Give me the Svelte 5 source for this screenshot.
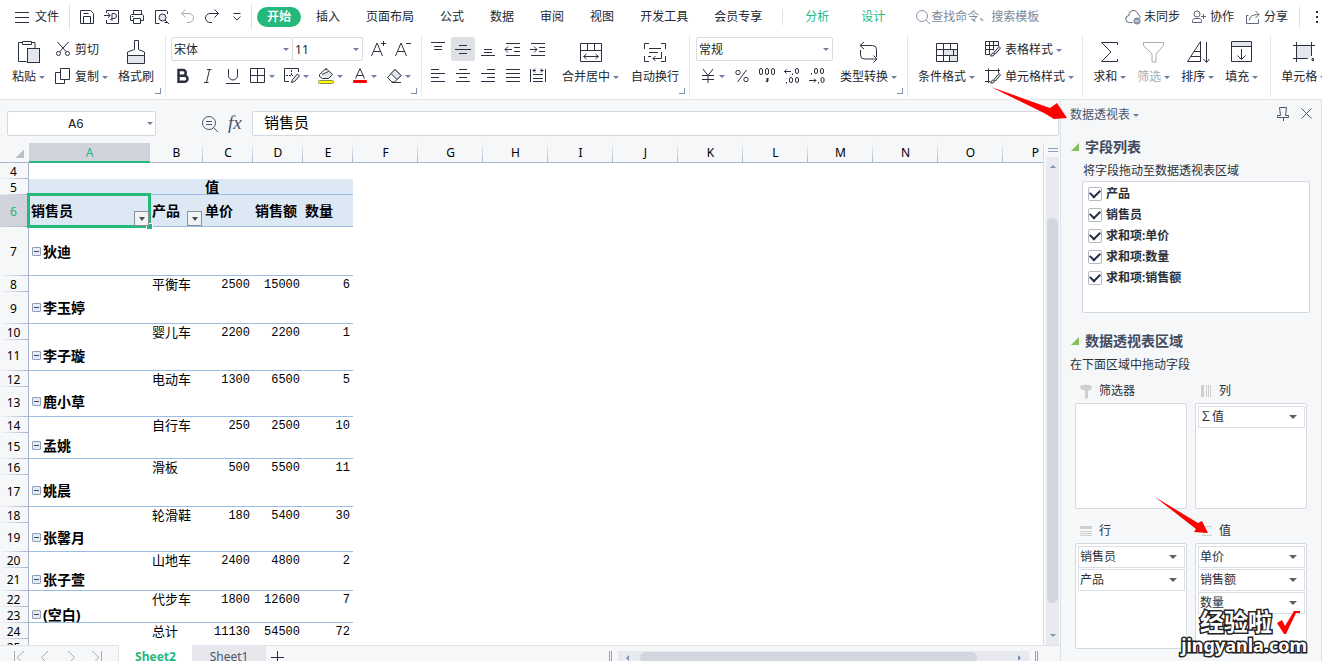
<script>
    let nameBox = 'A6';
    let formula = '销售员';
    let selectedCol = 'A';
    let selectedRow = 6;

    // icon bodies, small ones on a 16 grid, ribbon ones on a 24 grid
    const icons = {
        menu: '<path d="M1 3.5h14M1 8.5h14M1 13.5h14"/>',
        dots: '<path fill="#2b3140" stroke="none" d="M7 2h2v2H7zM7 7h2v2H7zM7 12h2v2H7z"/>',
        save: '<path d="M1.5 1.5h10l3 3v10h-13zM4.5 14.5v-7h7v7M4.5 4.5h5"/>',
        exportPdf: '<path d="M2.5 4V1.5h12v13h-12V11M0 6.5h6M4 4l2 2.5L4 9M8 12V4.5h2a2.500 2.500 0 0 1 0 5c-2 0-3.500 0-3.500 1.500"/>',
        print: '<path d="M4.5 5V1.500h8V5M4 11.500H1.500v-5l1-1h11l1 1v5H12M4.500 9.500h7v5h-7zM3 7.500h1.500"/>',
        preview: '<path d="M5.500 14.500h-4v-13h11l1 1V5M10.500 13.500h3"/><circle cx="8.500" cy="8.500" r="3.500" fill="#e3e6ec"/><path d="M11 11l4 4"/>',
        undo: '<path stroke="#a9adb6" d="M6.500 .500L2.500 4.500l4 4M2.500 4.500H10a4.500 4.500 0 0 1 0 9H8"/>',
        redo: '<path d="M10.500 .500l4 4-4 4M14.500 4.500H6a4.500 4.500 0 0 0 0 9h2"/>',
        more: '<path d="M4.500 4.500h7M4.500 7.500L8 11l3.500-3.500"/>',
        search: '<circle cx="7" cy="7" r="5.500"/><path d="M11 11l4 4"/>',
        cloud: '<path d="M7.500 13.500H4.500a3.500 3.500 0 0 1-.500-7 4.500 4.500 0 0 1 9-1c1.500.500 2.500 2 2 3.500"/><circle cx="12" cy="12" r="3.500" fill="#8491ad" stroke="none"/><path stroke="#fff" d="M10 12h4"/>',
        people: '<circle cx="6" cy="5" r="3"/><path d="M1.500 13.500v-2l1.500-2h6l1.500 2v2zM10 7.500h5M12.500 5v5"/>',
        share: '<path d="M3.500 6.500h-2v8h12v-4M4.500 11.500c0-4 3-6 9-6M10.500 2l3.500 3.500L10.500 9"/>',
        cut: '<path d="M2.500 1L11.500 11M13.500 1L4.500 11"/><circle cx="3.500" cy="12.500" r="2"/><circle cx="12.500" cy="12.500" r="2"/>',
        copy: '<path d="M5.500.500h9v11h-9zM5 4.500H.500v11h9V12"/>',
        growFont: '<path d="M.500 15L6 2l5.500 13M2.500 10.500h7M10 2.500h5M12.500 0v5"/>',
        shrinkFont: '<path d="M.500 15L6 2l5.500 13M2.500 10.500h7M11 2.500h5"/>',
        bold: '<path stroke-width="2.500" d="M3.500 2h5a3 3 0 0 1 0 5.800h-5zM3.500 7.800h6a3 3 0 0 1 0 6h-6z"/>',
        italic: '<path d="M7 1.500h4.500M4 14.500h4.500M9.500 1.500l-3 13"/>',
        underline: '<path d="M3.500 1v6.500a4.500 4.500 0 0 0 9 0V1M1 15.500h14"/>',
        borders: '<path d="M.500.500h14v14h-14zM7.500.500v14M.500 7.500h14"/>',
        drawBorder: '<path d="M3 .500H.500v13H5M3 .500h11.500V4"/><path stroke-dasharray="2 1" d="M2 7.500h7M7.500 2v6"/><path d="M7.500 14.500l1-3L13.500 6l2 2-5 5.500z" fill="#e3e6ec"/>',
        fill: '<path fill="#e3e6ec" stroke="none" d="M4 7l8-3 3 3-4 4H6z"/><path d="M1.500 6.500l6.500-6 6.500 6-4 4h-6l-3-2zM4 6.500l6.500-3M8 .500v2"/><rect x=".500" y="12.500" width="15" height="3" rx="1" fill="#ffff00" stroke="#8a8a55"/>',
        fontColor: '<path d="M3.500 10.500L8 .500l4.500 10M5 7.500h6"/><rect x="1" y="12" width="14" height="3" rx="1" fill="#ff0000" stroke="none"/>',
        eraser: '<path d="M9 1.500l6 6-6.500 6.500H6L1.500 9.500z"/><path d="M9 1.500l6 6-4 4-6-6z" fill="#e3e6ec"/><path d="M6 14.500h9"/>',
        alignTop: '<path d="M1 1.500h14M4 5.500h8M4 8.500h8"/>',
        alignMid: '<path d="M4 4.500h8M0 8.500h16M4 12.500h8"/>',
        alignBottom: '<path d="M4 8.500h8M4 11.500h8M1 14.500h14"/>',
        outdent: '<path d="M1 2.500h14M9 6.500h6M9 10.500h6M1 14.500h14M0 8.500h7M3 5.500l-3 3 3 3"/>',
        indent: '<path d="M1 2.500h14M9 6.500h6M9 10.500h6M1 14.500h14M0 8.500h7M4 5.500l3 3-3 3"/>',
        alignLeft: '<path d="M1 1.500h8M1 5.500h14M1 9.500h8M1 13.500h14"/>',
        alignCenter: '<path d="M4 1.500h8M1 5.500h14M4 9.500h8M1 13.500h14"/>',
        alignRight: '<path d="M7 1.500h8M1 5.500h14M7 9.500h8M1 13.500h14"/>',
        justify: '<path d="M1 1.500h14M1 5.500h14M1 9.500h14M1 13.500h14"/>',
        distribute: '<path d="M.500 1v13M15.500 1v13M3 2.500h3M10 2.500h3M5 .500l-2 2 2 2M11 .500l2 2-2 2M3 6.500h10M3 10.500h10M3 13.500h10"/>',
        yen: '<path d="M3 1l5 6.500L13 1M8 7.500V15M2 7.500h12M2 11.500h12"/>',
        percent: '<circle cx="4" cy="4.500" r="2.200"/><circle cx="12" cy="11.500" r="2.200"/><path d="M12.500 2l-9 12"/>',
        thousands: '<rect x=".500" y=".500" width="3" height="6" rx="1.500"/><rect x="6.500" y=".500" width="3" height="6" rx="1.500"/><rect x="12.500" y=".500" width="3" height="6" rx="1.500"/><path stroke-width="2" d="M8.500 10v2.500l-1 1.500"/>',
        addDecimal: '<path d="M0 3.500h7M2.500 1.500l-2 2 2 2M8.500 5.500v1.500M2.500 14v1.500"/><rect x="11.500" y=".500" width="3" height="5" rx="1.500"/><rect x="5.500" y="9.500" width="3" height="5" rx="1.500"/><rect x="11.500" y="9.500" width="3" height="5" rx="1.500"/>',
        cutDecimal: '<path d="M0 12.500h7M5 10.500l2 2-2 2M2.500 5v1.500M9.500 14v1.500"/><rect x="5.500" y=".500" width="3" height="5" rx="1.500"/><rect x="11.500" y=".500" width="3" height="5" rx="1.500"/><rect x="12" y="9.500" width="3" height="5" rx="1.500"/>',
        tableStyle: '<path d="M5 13.500H.500v-13h13V5M.500 4.500h13M.500 8.500H9M4.500.500v13M8.500.500v9"/><path d="M5.500 15c1-1 .500-3 3-3l1 1c0 2-2 2-4 2zM9 11.500l5-6 1.500 1.500-5 6z" fill="#e3e6ec"/>',
        cellStyle: '<path d="M0 2.500h15M3.500.500V15M13.500.500V5M0 13.500h5"/><path d="M5.500 15c1-1 .500-3 3-3l1 1c0 2-2 2-4 2zM9 11.500l5-6 1.500 1.500-5 6z" fill="#e3e6ec"/>',
        paste: '<path d="M9.500 21.500h-8v-19h4M14 2.500h4V8M5.500 1.500h9v3h-9z"/><rect x="10.500" y="8.500" width="12" height="14" fill="#e3e6ec"/>',
        brush: '<path d="M3.500 16v-4l7-2.500v-9h4v9l6 2.500v4"/><path d="M3.500 15.500h17v8h-17z" fill="#e3e6ec"/>',
        merge: '<path d="M1.500 3.500h21v18h-21zM1.500 10.500h21M8.500 3.500v7M15.500 3.500v7M5 16.500h14M7.500 14l-3 2.500 3 2.500M16.500 14l3 2.500-3 2.500"/>',
        wrap: '<path d="M6 3.500H1.500V9M18 3.500h4.500V9M6 21.500H1.500V16M18 21.500h4.500V16M6 8.500h12M6 12.500h9M18.500 12v6.500H10M12.500 16l-2.500 2.500 2.500 2.500M5 16.500h3"/>',
        convert: '<path d="M3 5.500h12.500a4 4 0 0 1 4 4V17M7 2L3 5.500 7 9M3.500 10v5a4 4 0 0 0 4 4H20M16.500 15.500L20 19l-3.500 3.500"/>',
        conditional: '<path fill="#e3e6ec" stroke="none" d="M8 9h14v6H8zM14 15h8v6h-8z"/><path d="M1.500 3.500h21v18h-21zM1.500 9.500h21M1.500 15.500h21M8.500 3.500v6M15.500 3.500v6M8.500 9.500v12M14.500 15.500v6M18.500 9.500v6"/>',
        sum: '<path d="M19.500 5V2.500H3.500L13 12 3.500 21.500h16V19"/>',
        filter: '<path stroke="#a9adb6" d="M1.500 2.500h20v3l-7.500 8.500v8h-4v-8L1.500 5.500z"/>',
        sort: '<path d="M1.500 21.500h13v-20zM5 16.500h9M8 11.500h6M20.500 2v20M17.500 19l3 3.500 3-3.500"/>',
        fillDown: '<path fill="#e3e6ec" stroke="none" d="M2 2h20v4H2z"/><path d="M1.500 1.500h20v20h-20zM1.500 6.500h20M11.500 9v10M7.500 15.500l4 4 4-4"/>',
        cells: '<path fill="#e3e6ec" stroke="none" d="M5 6h14v12H5z"/><path d="M1 5.500h22M4.500 2v20M19.500 2v14M1 18.500h15M20 18.500h1.500v2H20z"/>',
        zoomOut: '<circle cx="8" cy="8" r="6.500"/><path d="M5 6.500h6M5 9.500h6M12.500 12.500l4.500 4.500"/>',
        pin: '<path d="M4.500 1.500h7l-1 8h3v2h-11v-2h3zM8.500 11.500V15"/>',
        close: '<path d="M2.500 2.500l10 10M12.500 2.500l-10 10"/>',
        first: '<path d="M3.500 2v13M13 2L6 8.500 13 15"/>',
        prev: '<path d="M11 2L4.500 8.500 11 15"/>',
        next: '<path d="M5 2l6.500 6.500L5 15"/>',
        last: '<path d="M3 2l7 6.500L3 15M12.500 2v13"/>',
        plus: '<path d="M7.500 2v13M1 8.500h13"/>',
        areaFilter: '<path fill="#cfcfcf" stroke="none" d="M2 4c0-3 12-3 12 0 0 2-2 3-4 4v7.500H7V8C5 7 2 6 2 4z"/>',
        areaColumn: '<path fill="#cfcfcf" stroke="none" d="M3 2h3v12H3zM8 2h1v12H8zM10 2h1v12h-1zM12 2h1v12h-1z"/>',
        areaRow: '<path fill="#cfcfcf" stroke="none" d="M2 3h12v3H2zM2 8h12v1H2zM2 10h12v1H2zM2 12h12v1H2z"/>',
        areaValue: '<path stroke="#cfcfcf" d="M13 5V3.500H4L9 8l-5 4.500h9V11"/>'
    };

    const quick = ['save', 'exportPdf', 'print', 'preview', 'undo', 'redo', 'more'];
    const tabs = ['插入', '页面布局', '公式', '数据', '审阅', '视图', '开发工具', '会员专享'];
    const vertical = ['alignTop', 'alignMid', 'alignBottom', 'outdent', 'indent'];
    const horizontal = ['alignLeft', 'alignCenter', 'alignRight', 'justify', 'distribute'];
    const fontTools = ['borders', 'drawBorder', 'fill', 'fontColor', 'eraser'];

    const columns = [
        {name: 'A', width: 121}, {name: 'B', width: 53}, {name: 'C', width: 50},
        {name: 'D', width: 50}, {name: 'E', width: 50},
        ...'FGHIJKLMNOP'.split('').map((name) => ({name, width: 65}))
    ];

    const rows = [
        {n: 4, height: 16, cells: []},
        {n: 5, height: 16, kind: 'head', line: true, cells: ['', '', '值']},
        {n: 6, height: 32, kind: 'head', line: true, cells: ['销售员', '产品', '单价', '销售额', '数量']},
        {n: 7, height: 49, line: true, group: '狄迪', cells: []},
        {n: 8, height: 16, cells: ['', '平衡车', 2500, 15000, 6]},
        {n: 9, height: 32, line: true, group: '李玉婷', cells: []},
        {n: 10, height: 16, cells: ['', '婴儿车', 2200, 2200, 1]},
        {n: 11, height: 31, line: true, group: '李子璇', cells: []},
        {n: 12, height: 16, cells: ['', '电动车', 1300, 6500, 5]},
        {n: 13, height: 30, line: true, group: '鹿小草', cells: []},
        {n: 14, height: 16, cells: ['', '自行车', 250, 2500, 10]},
        {n: 15, height: 26, line: true, group: '孟姚', cells: []},
        {n: 16, height: 16, cells: ['', '滑板', 500, 5500, 11]},
        {n: 17, height: 32, line: true, group: '姚晨', cells: []},
        {n: 18, height: 16, cells: ['', '轮滑鞋', 180, 5400, 30]},
        {n: 19, height: 29, line: true, group: '张馨月', cells: []},
        {n: 20, height: 16, cells: ['', '山地车', 2400, 4800, 2]},
        {n: 21, height: 23, line: true, group: '张子萱', cells: []},
        {n: 22, height: 16, cells: ['', '代步车', 1800, 12600, 7]},
        {n: 23, height: 16, line: true, group: '(空白)', cells: []},
        {n: 24, height: 16, cells: ['', '总计', 11130, 54500, 72]},
        {n: 25, height: 16, cells: []}
    ];

    let fields = [
        {name: '产品', checked: true},
        {name: '销售员', checked: true},
        {name: '求和项:单价', checked: true},
        {name: '求和项:数量', checked: true},
        {name: '求和项:销售额', checked: true}
    ];

    const areas = [
        {name: '筛选器', icon: 'areaFilter', items: []},
        {name: '列', icon: 'areaColumn', items: ['∑值']},
        {name: '行', icon: 'areaRow', items: ['销售员', '产品']},
        {name: '值', icon: 'areaValue', items: ['单价', '销售额', '数量']}
    ];
</script>

{#snippet icon(name, size = 16)}
    <svg class="icon" width={size} height={size} viewBox="0 0 {size} {size}" aria-hidden="true">{@html icons[name]}</svg>
{/snippet}

{#snippet big(name, label, caret = true)}
    <button class="Big">
        {@render icon(name, 24)}
        <span class="Label">{label}{#if caret}<i class="caret"></i>{/if}</span>
    </button>
{/snippet}

{#snippet small(name, label, caret = false)}
    <button class="Small">
        {@render icon(name)}
        <span class="Label">{label}{#if caret}<i class="caret"></i>{/if}</span>
    </button>
{/snippet}

<div class="App">
    <nav class="Menu">
        <button class="File">{@render icon('menu')}文件</button>
        <div class="Quick">
            {#each quick as name}
                <button aria-label={name}>{@render icon(name)}</button>
            {/each}
        </div>
        <button class="Tab Tab--active">开始</button>
        <div class="Tabs">
            {#each tabs as tab}
                <button class="Tab">{tab}</button>
            {/each}
        </div>
        <div class="Context">
            <button class="Tab">分析</button>
            <button class="Tab">设计</button>
        </div>
        <label class="Search">
            {@render icon('search')}
            <input type="text" placeholder="查找命令、搜索模板">
        </label>
        <div class="Account">
            <button>{@render icon('cloud')}未同步</button>
            <button>{@render icon('people')}协作</button>
            <button>{@render icon('share')}分享</button>
            <button class="Dots" aria-label="更多">{@render icon('dots')}</button>
        </div>
    </nav>

    <div class="Ribbon">
        <div class="Group Group--corner">
            {@render big('paste', '粘贴')}
            <div class="Stack">
                {@render small('cut', '剪切')}
                {@render small('copy', '复制', true)}
            </div>
            {@render big('brush', '格式刷', false)}
        </div>
        <div class="Group Group--font Group--corner">
            <div class="Stack">
                <div class="Row Row--fields">
                    <div class="Pick Pick--family">
                        <select aria-label="字体"><option>宋体</option></select><i class="caret"></i>
                    </div>
                    <div class="Pick Pick--size">
                        <select aria-label="字号"><option>11</option></select><i class="caret"></i>
                    </div>
                    <button aria-label="增大字号">{@render icon('growFont')}</button>
                    <button aria-label="减小字号">{@render icon('shrinkFont')}</button>
                </div>
                <div class="Row Row--tools">
                    {#each ['bold', 'italic', 'underline'] as name}
                        <button aria-label={name}>{@render icon(name)}</button>
                    {/each}
                    {#each fontTools as name}
                        <button aria-label={name}>{@render icon(name)}<i class="caret"></i></button>
                    {/each}
                </div>
            </div>
        </div>
        <div class="Group Group--align Group--corner">
            <div class="Stack">
                <div class="Row">
                    {#each vertical as name}
                        <button class="Align" class:Align--on={name == 'alignMid'} aria-label={name}>{@render icon(name)}</button>
                    {/each}
                </div>
                <div class="Row">
                    {#each horizontal as name}
                        <button class="Align" aria-label={name}>{@render icon(name)}</button>
                    {/each}
                </div>
            </div>
            {@render big('merge', '合并居中')}
            {@render big('wrap', '自动换行', false)}
        </div>
        <div class="Group Group--number Group--corner">
            <div class="Stack">
                <div class="Pick Pick--format">
                    <select aria-label="数字格式"><option>常规</option></select><i class="caret"></i>
                </div>
                <div class="Row Row--tools">
                    <button aria-label="货币">{@render icon('yen')}<i class="caret"></i></button>
                    {#each ['percent', 'thousands', 'addDecimal', 'cutDecimal'] as name}
                        <button aria-label={name}>{@render icon(name)}</button>
                    {/each}
                </div>
            </div>
            {@render big('convert', '类型转换')}
        </div>
        <div class="Group">
            {@render big('conditional', '条件格式')}
            <div class="Stack">
                {@render small('tableStyle', '表格样式', true)}
                {@render small('cellStyle', '单元格样式', true)}
            </div>
        </div>
        <div class="Group Group--edit">
            {@render big('sum', '求和')}
            <div class="Muted">{@render big('filter', '筛选')}</div>
            {@render big('sort', '排序')}
            {@render big('fillDown', '填充')}
        </div>
        <div class="Group">
            {@render big('cells', '单元格')}
        </div>
    </div>

    <div class="Main">
        <section class="Sheet">
            <div class="Formula">
                <div class="NameBox">
                    <input type="text" aria-label="名称框" bind:value={nameBox}><i class="caret"></i>
                </div>
                <button class="ZoomOut" aria-label="缩小">{@render icon('zoomOut', 18)}</button>
                <button class="Fx">fx</button>
                <input class="Formula__Text" type="text" aria-label="编辑栏" bind:value={formula}>
            </div>
            <div class="Body">
                <div class="Grid">
                    <table>
                        <colgroup>
                            <col style="width: 29px">
                            {#each columns as col}
                                <col style="width: {col.width}px">
                            {/each}
                        </colgroup>
                        <thead>
                            <tr>
                                <th class="All" aria-label="全选"></th>
                                {#each columns as col}
                                    <th class="Col" class:Col--on={col.name == selectedCol}>{col.name}</th>
                                {/each}
                            </tr>
                        </thead>
                        <tbody>
                            {#each rows as row}
                                <tr class:Head={row.kind == 'head'} class:Line={row.line} style="height: {row.height}px">
                                    <th class="Num" class:Num--on={row.n == selectedRow}>{row.n}</th>
                                    {#each columns as col, i}
                                        <td class:Number={typeof row.cells[i] == 'number'} class:Data={i < 5}>
                                            {#if i == 0 && row.group}
                                                <span class="Person"><button class="Toggle" aria-label="折叠"></button>{row.group}</span>
                                            {:else}
                                                {row.cells[i] ?? ''}
                                            {/if}
                                            {#if row.n == 6 && i == 0}
                                                <span class="Selection"></span>
                                            {/if}
                                            {#if row.n == 6 && i < 2}
                                                <button class="Filter" aria-label="筛选"></button>
                                            {/if}
                                        </td>
                                    {/each}
                                </tr>
                            {/each}
                        </tbody>
                    </table>
                </div>
                <div class="Gutter">
                    <span class="Split"></span>
                    <div class="Track">
                        <i class="arrow arrow--up"></i>
                        <div class="Thumb"></div>
                        <i class="arrow arrow--down"></i>
                    </div>
                </div>
            </div>
            <div class="Bottom">
                <div class="Nav">
                    {#each ['first', 'prev', 'next', 'last'] as name}
                        <button aria-label={name}>{@render icon(name)}</button>
                    {/each}
                </div>
                <button class="Page Page--on">Sheet2</button>
                <button class="Page">Sheet1</button>
                <button class="Add" aria-label="新建工作表">{@render icon('plus')}</button>
                <div class="HScroll">
                    <span class="Grip"></span>
                    <div class="HTrack">
                        <i class="arrow arrow--left"></i>
                        <div class="HThumb"></div>
                        <i class="arrow arrow--right"></i>
                    </div>
                    <span class="Grip"></span>
                </div>
            </div>
        </section>

        <aside class="Panel">
            <header class="Panel__Header">
                <button class="Label">数据透视表<i class="caret"></i></button>
                <button class="Pin" aria-label="固定">{@render icon('pin')}</button>
                <button aria-label="关闭">{@render icon('close')}</button>
            </header>
            <h2>字段列表</h2>
            <p class="Hint Hint--fields">将字段拖动至数据透视表区域</p>
            <div class="Fields">
                {#each fields as field}
                    <label><input type="checkbox" bind:checked={field.checked}>{field.name}</label>
                {/each}
            </div>
            <h2>数据透视表区域</h2>
            <p class="Hint">在下面区域中拖动字段</p>
            <div class="Areas">
                {#each areas as area}
                    <div class="Area">
                        <h3>{@render icon(area.icon)}{area.name}</h3>
                        <div class="Area__Box">
                            {#each area.items as item}
                                <button class="Item">{item}<i></i></button>
                            {/each}
                        </div>
                    </div>
                {/each}
            </div>
            <svg class="Arrow Arrow--title" width="80" height="36" viewBox="0 0 80 36" aria-hidden="true">
                <path d="M1 1L60 22L67 17L77 32L64 33L54 27Z"/>
            </svg>
            <svg class="Arrow Arrow--value" width="56" height="40" viewBox="0 0 56 40" aria-hidden="true">
                <path d="M1 1L44 27L48 25L54 37L40 36L42 33Z"/>
            </svg>
            <div class="Mark">
                <div class="Mark__Name">
                    经验啦
                    <svg width="24" height="24" viewBox="0 0 24 24" aria-hidden="true">
                        <path d="M0 12l5-3 3 6L17 0h6v2h-4L9 23H7z"/>
                    </svg>
                </div>
                <div class="Mark__Site">jingyanla.com</div>
            </div>
        </aside>
    </div>
</div>

<style>
    :global(body) {
        overflow: hidden;
    }

    .App {
        display: flex;
        flex-direction: column;
        height: 100vh;
        overflow: hidden;
        background: #ffffff;
        color: #23272f;
        font-family: "Noto Sans", "Noto Sans CJK SC", sans-serif;
        font-size: 12px;
        line-height: 16px;
    }

    .App * {
        box-sizing: border-box;
    }

    button, input, select {
        margin: 0;
        padding: 0;
        border: none;
        outline: none;
        background: none;
        color: inherit;
        font: inherit;
    }

    button {
        display: flex;
        align-items: center;
        white-space: nowrap;
        flex: none;
    }

    .icon {
        display: block;
        flex: none;
        overflow: visible;
        fill: none;
        stroke: #2b3140;
        stroke-width: 1;
    }

    .caret {
        flex: none;
        margin-left: 3px;
        border: 3px solid transparent;
        border-top-color: #6f7f9f;
        border-bottom: none;
    }

    .Menu {
        display: flex;
        align-items: center;
        flex: none;
        height: 33px;
        padding-left: 14px;
    }

    .File {
        gap: 5px;
        height: 24px;
        padding-right: 10px;
        border-right: 1px solid #dcdfe3;
    }

    .Quick {
        display: flex;
        gap: 9px;
        height: 24px;
        padding: 0 6px 0 9px;
        border-right: 1px solid #dcdfe3;
    }

    .Tabs {
        display: flex;
    }

    .Tab {
        padding: 0 13px;
    }

    .Tab--active {
        height: 20px;
        margin: 0 2px 0 5px;
        padding: 0 10px;
        border-radius: 10px;
        background: #22b97b;
        color: #ffffff;
        font-weight: bold;
    }

    .Context {
        display: flex;
        gap: 6px;
        margin-left: 7px;
        padding-left: 9px;
        border-left: 1px solid #dcdfe3;
        color: #22b97b;
    }

    .Search {
        display: flex;
        align-items: center;
        flex: 1;
        min-width: 60px;
        margin-left: 17px;
        color: #7e8798;
    }

    .Search .icon {
        stroke: #8a93a6;
    }

    .Search input {
        flex: 1;
        min-width: 0;
    }

    .Search input::placeholder {
        color: #7e8798;
        opacity: 1;
    }

    .Account {
        display: flex;
        align-items: center;
        gap: 11px;
        margin-left: auto;
    }

    .Account button {
        gap: 3px;
    }

    .Account .icon {
        stroke: #5d6778;
    }

    .Account .Dots {
        width: 23px;
        height: 20px;
        padding-left: 9px;
        border-left: 1px solid #dcdfe3;
    }

    .Ribbon {
        display: flex;
        flex: none;
        height: 67px;
        overflow: hidden;
        border-bottom: 1px solid #e1e3e6;
    }

    .Group {
        position: relative;
        display: flex;
        flex: none;
        gap: 10px;
        padding: 4px 9px 0 10px;
    }

    .Group:first-child {
        padding-left: 12px;
    }

    .Group::before {
        content: "";
        position: absolute;
        right: 0;
        top: 2px;
        bottom: 2px;
        border-right: 1px solid #e6e8eb;
    }

    .Group--corner::after {
        content: "";
        position: absolute;
        right: 5px;
        bottom: 5px;
        width: 5px;
        height: 5px;
        border: solid #8491ad;
        border-width: 0 1px 1px 0;
    }

    .Group--corner {
        padding-right: 12px;
    }

    .Group--font {
        padding-left: 5px;
        padding-right: 11px;
    }

    .Group--align {
        gap: 12px;
        padding-left: 4px;
        padding-right: 11px;
    }

    .Group--number {
        gap: 7px;
        padding-left: 6px;
        padding-right: 11px;
    }

    .Group--edit {
        gap: 11px;
        padding-right: 13px;
    }

    .Stack {
        display: flex;
        flex-direction: column;
        gap: 3px;
    }

    .Row {
        display: flex;
        gap: 1px;
        height: 24px;
    }

    .Row--tools {
        gap: 9px;
        padding-left: 4px;
    }

    .Row--fields {
        gap: 0;
    }

    .Row--fields button {
        margin-left: 8px;
    }

    .Big {
        flex-direction: column;
        padding-top: 3px;
    }

    .Label {
        display: flex;
        align-items: center;
        height: 24px;
        padding-top: 2px;
    }

    .Small {
        gap: 4px;
        height: 24px;
    }

    .Muted {
        color: #a9adb6;
    }

    .Align {
        justify-content: center;
        width: 24px;
        height: 24px;
        border-radius: 2px;
    }

    .Align--on {
        background: #dde1e6;
    }

    .Pick {
        display: flex;
        align-items: center;
        height: 24px;
        padding-right: 3px;
        border: 1px solid #d9dce1;
        border-radius: 2px;
    }

    .Pick select {
        flex: 1;
        min-width: 0;
        padding: 1px 0 0 2px;
        appearance: none;
    }

    .Pick--family {
        width: 122px;
    }

    .Pick--size {
        width: 71px;
        margin-left: -1px;
    }

    .Pick--format {
        width: 137px;
    }

    .Main {
        display: flex;
        flex: 1;
        min-height: 0;
        background: #f5f7f9;
    }

    .Sheet {
        display: flex;
        flex-direction: column;
        flex: 1;
        min-width: 0;
    }

    .Formula {
        display: flex;
        align-items: center;
        flex: none;
        padding: 11px 1px 7px 7px;
    }

    .NameBox {
        display: flex;
        align-items: center;
        width: 149px;
        height: 25px;
        padding-right: 2px;
        border: 1px solid #d5d9df;
        border-radius: 2px;
        background: #ffffff;
    }

    .NameBox input {
        flex: 1;
        min-width: 0;
        padding-top: 2px;
        font-family: "Liberation Mono", monospace;
        font-size: 13px;
        text-align: center;
    }

    .ZoomOut {
        margin-left: 45px;
    }

    .ZoomOut .icon, .Panel__Header .icon {
        stroke: #4b566c;
    }

    .Fx {
        width: 33px;
        padding: 0 0 2px 9px;
        color: #4b566c;
        font-family: "Liberation Serif", serif;
        font-size: 19px;
        font-style: italic;
    }

    .Formula__Text {
        flex: 1;
        min-width: 0;
        height: 25px;
        padding: 0 11px 5px;
        border: 1px solid #d5d9df;
        border-radius: 2px;
        background: #ffffff;
        color: #000000;
        font-size: 15px;
    }

    .Body {
        display: flex;
        flex: 1;
        min-height: 0;
    }

    .Grid {
        flex: 1;
        min-width: 0;
        overflow: hidden;
        border-right: 1px solid #d9dde4;
        background: #ffffff;
    }

    table {
        width: 1px;
        table-layout: fixed;
        border-collapse: separate;
        border-spacing: 0;
        color: #000000;
        font-size: 13px;
        line-height: 15px;
    }

    th, td {
        padding: 0;
        font-weight: normal;
        white-space: nowrap;
    }

    thead th {
        height: 20px;
        border-bottom: 1px solid #aab4cc;
        background: linear-gradient(to bottom, transparent, #aab4cc) right / 1px 100% no-repeat #f5f7f9;
    }

    .Col {
        font-size: 12px;
    }

    .Col--on {
        border-bottom: 2px solid #22b97b;
        background: #d0d3db;
        color: #22b97b;
    }

    .All {
        background: linear-gradient(135deg, transparent 50%, #b9bdc5 50%) 15px 6px / 9px 9px no-repeat #f5f7f9;
    }

    .Num {
        padding-right: 1px;
        border-right: 1px solid #aab4cc;
        background: linear-gradient(to right, transparent, #aab4cc) bottom / 100% 1px no-repeat #f5f7f9;
        font-size: 12px;
    }

    .Num--on {
        background-color: #d0d3db;
        color: #22b97b;
    }

    td {
        position: relative;
        padding-left: 2px;
    }

    .Line .Data {
        border-bottom: 1px solid #9bbde3;
    }

    .Head .Data {
        background: #dce9f5;
        font-size: 14px;
        font-weight: bold;
    }

    .Number {
        padding: 1px 3px 0 0;
        font-family: "Liberation Mono", monospace;
        font-size: 12px;
        line-height: 14px;
        text-align: right;
        vertical-align: bottom;
    }

    .Person {
        display: flex;
        align-items: center;
        gap: 2px;
        padding-left: 1px;
        font-size: 14px;
        font-weight: bold;
    }

    .Toggle {
        width: 9px;
        height: 9px;
        border: 1px solid #8fa0bf;
        border-radius: 1px;
        background: linear-gradient(#3b4a68, #3b4a68) center / 5px 1px no-repeat #e6e9ee;
    }

    .Selection {
        position: absolute;
        inset: -2px -1px -2px -2px;
        z-index: 1;
        border: 3px solid #22b97b;
    }

    .Selection::after {
        content: "";
        position: absolute;
        right: -4px;
        bottom: -4px;
        width: 5px;
        height: 5px;
        background: #22b97b;
        outline: 1px solid #ffffff;
    }

    .Filter {
        position: absolute;
        right: 1px;
        bottom: 0;
        z-index: 2;
        justify-content: center;
        width: 15px;
        height: 15px;
        border: 1px solid #8d9097;
        background: #f2f3f5;
    }

    .Filter::before {
        content: "";
        border: 3px solid transparent;
        border-top: 4px solid #4a4d53;
        border-bottom: none;
    }

    .Gutter {
        display: flex;
        flex-direction: column;
        width: 16px;
        padding-left: 2px;
    }

    .Split {
        height: 4px;
        margin: 5px 2px;
        border: solid #8fa0bf;
        border-width: 1px 0;
    }

    .Track {
        display: flex;
        flex-direction: column;
        align-items: center;
        flex: 1;
        width: 13px;
        padding: 8px 0;
        background: #e8eaef;
    }

    .Thumb {
        flex: 1;
        width: 11px;
        margin: 50px 0 31px;
        border-radius: 6px;
        background: #d3d6df;
    }

    .arrow {
        border: 3px solid transparent;
    }

    .arrow--up {
        border-bottom-color: #7f91b3;
        border-top: none;
    }

    .arrow--down {
        border-top-color: #7f91b3;
        border-bottom: none;
    }

    .arrow--left {
        border-right-color: #7f91b3;
        border-left: none;
    }

    .arrow--right {
        border-left-color: #7f91b3;
        border-right: none;
    }

    .Bottom {
        display: flex;
        flex: none;
        height: 16px;
        overflow: hidden;
    }

    .Bottom > * {
        height: 23px;
    }

    .Nav {
        display: flex;
        gap: 10px;
        width: 119px;
        padding-left: 11px;
        border: solid #dfe2e8;
        border-width: 1px 1px 0 0;
    }

    .Nav .icon {
        stroke: #a6abb5;
    }

    .Page {
        justify-content: center;
        min-width: 74px;
        background: #e6e8ed;
        color: #4b566c;
    }

    .Page--on {
        min-width: 73px;
        background: #ffffff;
        color: #22b97b;
        font-weight: bold;
    }

    .Add {
        padding: 0 4px;
        border-top: 1px solid #dfe2e8;
    }

    .HScroll {
        display: flex;
        gap: 6px;
        flex: 1;
        padding: 5px 22px 0 0;
        border-top: 1px solid #dfe2e8;
        justify-content: flex-end;
    }

    .HTrack {
        display: flex;
        align-items: center;
        width: 55%;
        height: 13px;
        padding: 0 8px;
        background: #e8eaef;
    }

    .HThumb {
        flex: 1;
        height: 11px;
        margin: 0 41px 0 11px;
        border-radius: 6px;
        background: #d3d6df;
    }

    .Grip {
        width: 3px;
        border: solid #8fa0bf;
        border-width: 0 1px;
    }

    .Panel {
        position: relative;
        flex: none;
        width: 262px;
        padding: 2px 11px 0 9px;
        border: solid #dfe2e8;
        border-width: 0 1px;
        color: #2c3138;
    }

    .Panel__Header {
        display: flex;
        align-items: center;
        height: 24px;
        margin-right: -5px;
        color: #4b566c;
    }

    .Pin {
        margin: 0 8px 0 auto;
    }

    h2 {
        display: flex;
        align-items: center;
        gap: 6px;
        height: 20px;
        margin: 11px 0 0 1px;
        color: #414b5f;
        font-size: 14px;
        font-weight: bold;
    }

    h2::before {
        content: "";
        border: 4px solid #83c056;
        border-top-color: transparent;
        border-left-color: transparent;
    }

    .Hint {
        margin: 6px 0;
    }

    .Hint--fields {
        margin: 6px 0 2px 13px;
    }

    .Fields {
        height: 132px;
        margin: 0 0 0 12px;
        padding: 1px 5px;
        border: 1px solid #d5d9df;
        border-radius: 2px;
        background: #ffffff;
    }

    .Fields + h2 {
        margin-top: 18px;
    }

    .Fields label {
        display: flex;
        align-items: center;
        gap: 4px;
        height: 21px;
        font-weight: 600;
    }

    .Fields input {
        display: flex;
        align-items: center;
        justify-content: center;
        width: 14px;
        height: 14px;
        border: 1px solid #b5b9c0;
        border-radius: 2px;
        appearance: none;
    }

    .Fields input:checked::before {
        content: "";
        width: 8px;
        height: 5px;
        margin-top: -2px;
        border: solid #23304a;
        border-width: 0 0 2px 2px;
        transform: rotate(-45deg);
    }

    .Areas {
        display: grid;
        grid-template-columns: 1fr 1fr;
        gap: 10px 8px;
        margin: 0 3px 0 5px;
    }

    h3 {
        display: flex;
        align-items: center;
        gap: 5px;
        height: 24px;
        margin: 0;
        padding-left: 3px;
        font-size: 12px;
        font-weight: normal;
    }

    .Area__Box {
        display: flex;
        flex-direction: column;
        gap: 1px;
        height: 106px;
        padding: 2px 1px 0 2px;
        border: 1px solid #d5d9df;
        border-radius: 2px;
        background: #ffffff;
    }

    .Item {
        justify-content: space-between;
        height: 22px;
        padding: 0 7px 0 1px;
        border: 1px solid #dcdfe5;
    }

    .Item i {
        border: 4px solid transparent;
        border-top-color: #5c5f66;
        border-bottom: none;
    }

    .Arrow {
        position: absolute;
        fill: #ff0000;
    }

    .Arrow--title {
        left: -71px;
        top: -14px;
    }

    .Arrow--value {
        left: 93px;
        top: 396px;
    }

    .Mark {
        position: absolute;
        right: 14px;
        bottom: 6px;
        display: flex;
        flex-direction: column;
        align-items: flex-end;
        color: #ffffff;
        font-weight: bold;
        white-space: nowrap;
        paint-order: stroke fill;
        -webkit-text-stroke: 3px #222222;
    }

    .Mark__Name {
        display: flex;
        gap: 5px;
        margin-right: 6px;
        font-size: 24px;
        line-height: 22px;
    }

    .Mark__Name path {
        fill: #ff0000;
    }

    .Mark__Site {
        font-family: "Noto Sans", sans-serif;
        font-size: 18px;
        line-height: 20px;
    }
</style>
